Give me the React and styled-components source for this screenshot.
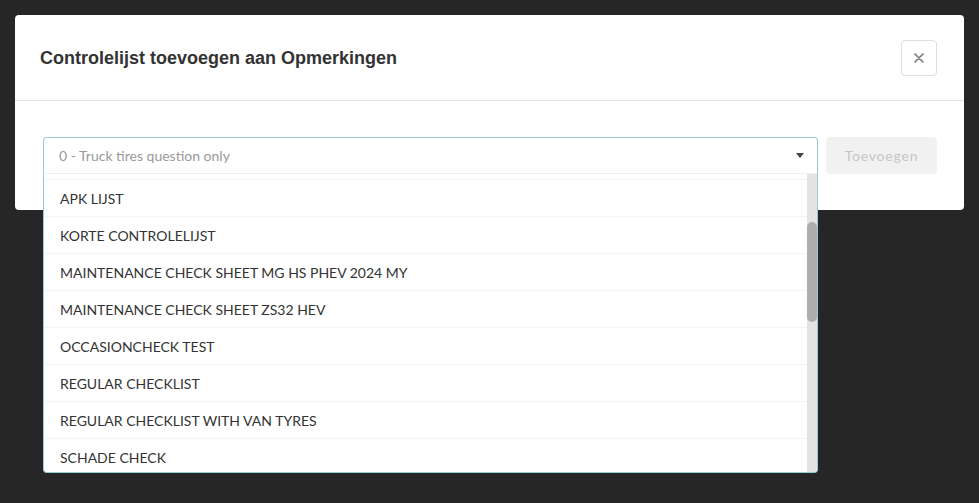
import React, { useLayoutEffect, useRef, useState } from "react";
import styled, { createGlobalStyle } from "styled-components";

const Global = createGlobalStyle`
  html, body { margin: 0; padding: 0; background: #262626; }
  body { font-family: Lato, "Liberation Sans", sans-serif; }
  * { box-sizing: border-box; }
`;

const Page = styled.div`
  min-height: 503px;
  padding: 15px;
  background: #262626;
`;

const Modal = styled.div`
  width: 949px;
  background: #fff;
  border-radius: 4px;
`;

const Header = styled.div`
  height: 86px;
  display: flex;
  align-items: center;
  justify-content: space-between;
  padding: 0 27px 0 25px;
  border-bottom: 1px solid #e3e3e3;
`;

const Title = styled.h4`
  margin: 0;
  font-family: "Liberation Sans", Arial, sans-serif;
  font-weight: 700;
  font-size: 18px;
  color: #333;
  padding-top: 1px;
`;

const CloseButton = styled.button`
  width: 36px;
  height: 36px;
  border: 1px solid #ddd;
  border-radius: 4px;
  background: #fff;
  display: flex;
  align-items: center;
  justify-content: center;
  padding: 0;
  margin-top: 1px;
`;

const Body = styled.div`
  padding: 36px 27px 36px 28px;
  display: flex;
  gap: 8px;
`;

const SelectWrap = styled.div`
  position: relative;
  flex: 1;
`;

const Control = styled.div`
  height: 37px;
  border: 1px solid #98cad6;
  border-bottom: 1px solid #f0f0f0;
  border-radius: 4px 4px 0 0;
  display: flex;
  align-items: center;
  justify-content: space-between;
  padding: 0 13px 0 15px;
`;

const Placeholder = styled.span`
  font-size: 14px;
  color: #999;
`;

const Caret = styled.span`
  width: 0;
  height: 0;
  border-left: 4.5px solid transparent;
  border-right: 4.5px solid transparent;
  border-top: 5px solid #444;
`;

const Menu = styled.div`
  position: absolute;
  top: 37px;
  left: 0;
  right: 0;
  height: 299px;
  background: #fff;
  border: 1px solid #98cad6;
  border-top: none;
  border-radius: 0 0 4px 4px;
  overflow: hidden;
`;

const List = styled.div`
  height: 100%;
  overflow-y: scroll;
  scrollbar-width: none;
  padding-right: 10px;
  &::-webkit-scrollbar { display: none; }
`;

const Track = styled.div`
  position: absolute;
  top: 0;
  right: 0;
  bottom: 0;
  width: 10px;
  background: #e3e3e3;
`;

const Thumb = styled.div`
  position: absolute;
  left: 0;
  width: 10px;
  border-radius: 5px;
  background: #adadad;
`;

const Option = styled.div`
  height: 37px;
  display: flex;
  align-items: center;
  padding: 1px 0 0 16px;
  border-top: 1px solid #f3f3f3;
  font-size: 14px;
  color: #333;
  white-space: nowrap;
`;

const AddButton = styled.button`
  width: 111px;
  height: 37px;
  border: none;
  border-radius: 4px;
  background: #f1f1f1;
  color: #c6c6c6;
  font-family: Lato, "Liberation Sans", sans-serif;
  font-size: 14px;
  letter-spacing: 0.8px;
  padding: 0;
`;

const options = [
  "0 - TRUCK TIRES QUESTION ONLY",
  "1 - BASIC CHECK",
  "AFLEVERCONTROLE",
  "AIRCO CHECK",
  "APK LIJST",
  "KORTE CONTROLELIJST",
  "MAINTENANCE CHECK SHEET MG HS PHEV 2024 MY",
  "MAINTENANCE CHECK SHEET ZS32 HEV",
  "OCCASIONCHECK TEST",
  "REGULAR CHECKLIST",
  "REGULAR CHECKLIST WITH VAN TYRES",
  "SCHADE CHECK",
  "SERVICE CHECK",
  "TESTLIJST",
  "TRUCK CHECK",
  "TRUCK TIRES",
  "VAN CHECK",
  "VERHUUR CHECK",
  "VOERTUIGINSPECTIE",
  "WERKPLAATS CHECK",
  "WINTERCHECK",
  "ZOMERCHECK",
  "ZS32 CHECK",
  "ZS EV CHECK",
];

const SCROLL = 143;

export default function App() {
  const listRef = useRef(null);
  const [thumb, setThumb] = useState({ top: 47, height: 100 });
  useLayoutEffect(() => {
    const el = listRef.current;
    if (!el) return;
    el.scrollTop = SCROLL;
    const track = el.clientHeight;
    const ratio = track / el.scrollHeight;
    setThumb({ top: Math.round(el.scrollTop * ratio), height: Math.round(track * ratio) });
  }, []);
  return (
    <>
      <Global />
      <Page>
        <Modal>
          <Header>
            <Title>Controlelijst toevoegen aan Opmerkingen</Title>
            <CloseButton aria-label="Sluiten">
              <svg width="10" height="10" viewBox="0 0 10 10">
                <path d="M1 1L9 9M9 1L1 9" stroke="#7a7a7a" strokeWidth="1.7" strokeLinecap="round" />
              </svg>
            </CloseButton>
          </Header>
          <Body>
            <SelectWrap>
              <Control>
                <Placeholder>0 - Truck tires question only</Placeholder>
                <Caret />
              </Control>
              <Menu>
                <List ref={listRef}>
                  {options.map((o) => (
                    <Option key={o}>{o}</Option>
                  ))}
                </List>
                <Track>
                  <Thumb style={{ top: thumb.top, height: thumb.height }} />
                </Track>
              </Menu>
            </SelectWrap>
            <AddButton>Toevoegen</AddButton>
          </Body>
        </Modal>
      </Page>
    </>
  );
}
